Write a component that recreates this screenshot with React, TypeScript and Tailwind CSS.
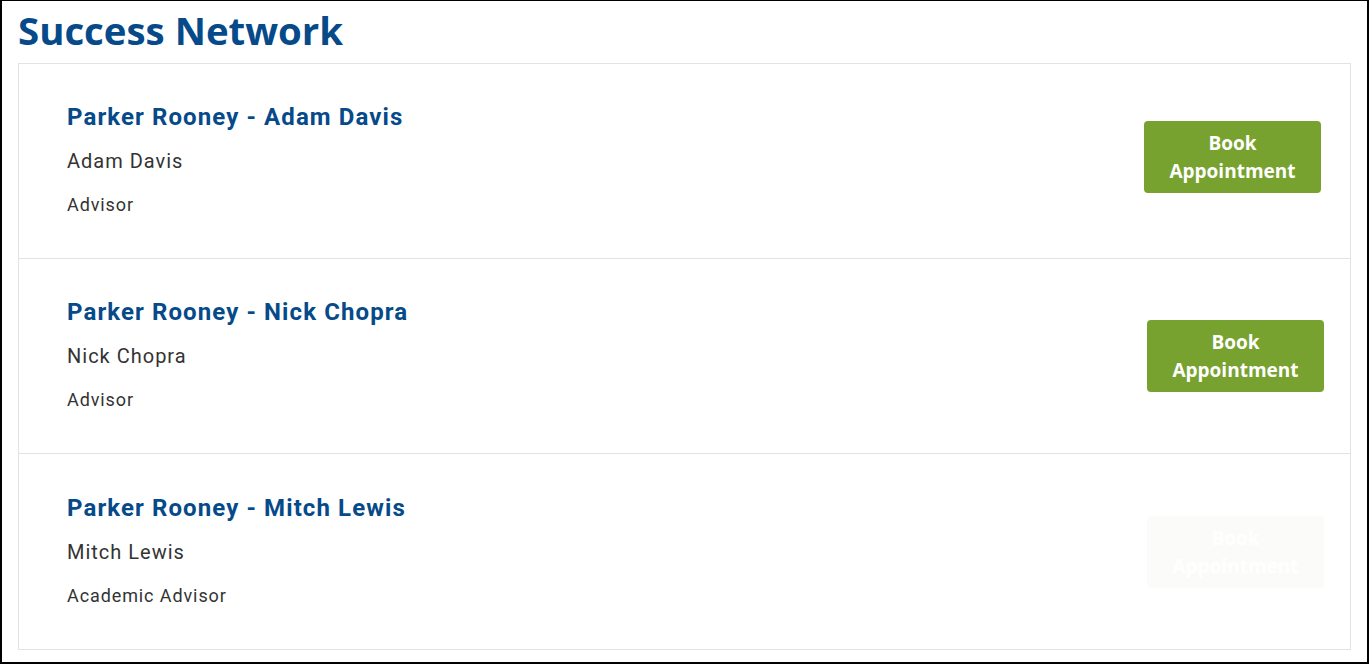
import React from "react";

type Contact = {
  title: string;
  name: string;
  role: string;
  faded?: boolean;
  nudge?: boolean;
};

const contacts: Contact[] = [
  { title: "Parker Rooney - Adam Davis", name: "Adam Davis", role: "Advisor", nudge: true },
  { title: "Parker Rooney - Nick Chopra", name: "Nick Chopra", role: "Advisor" },
  { title: "Parker Rooney - Mitch Lewis", name: "Mitch Lewis", role: "Academic Advisor", faded: true },
];

const ContactRow = ({ contact, last }: { contact: Contact; last: boolean }) => (
  <div
    className={`flex h-[195px] items-center justify-between pl-12 pr-[26px] ${
      last ? "" : "border-b border-[#e3e3e3]"
    }`}
  >
    <div className="flex flex-col font-['Roboto',sans-serif]">
      <span className="text-[24px] leading-[44px] font-bold tracking-[1.1px] text-[#064a8a]">
        {contact.title}
      </span>
      <span className="text-[20px] leading-[44px] tracking-[1px] text-[#333333]">{contact.name}</span>
      <span className="text-[18px] leading-[44px] tracking-[0.9px] text-[#333333]">{contact.role}</span>
    </div>
    <button
      className={`h-[72px] w-[177px] rounded-[4px] bg-[#78a22f] text-[19px] leading-[28px] font-bold text-white font-['Open_Sans',sans-serif] ${
        contact.faded ? "opacity-[0.02]" : ""
      } ${contact.nudge ? "mb-2 mr-[3px]" : ""}`}
    >
      Book
      <br />
      Appointment
    </button>
  </div>
);

export default function App() {
  return (
    <div className="h-[664px] w-[1369px] border-t border-x-2 border-b-2 border-black bg-white px-4">
      <h1 className="pt-[3px] text-[38.4px] leading-[52px] font-bold text-[#064a8a] font-['Open_Sans',sans-serif]">
        Success Network
      </h1>
      <div className="mt-[7px] border border-[#e3e3e3]">
        {contacts.map((c, i) => (
          <ContactRow key={c.title} contact={c} last={i === contacts.length - 1} />
        ))}
      </div>
    </div>
  );
}
